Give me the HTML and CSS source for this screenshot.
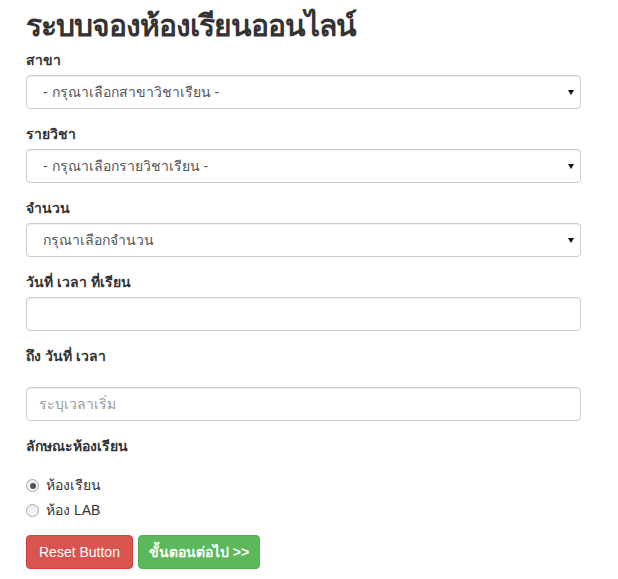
FILE: index.html
```html
<!DOCTYPE html>
<html lang="th">
<head>
<meta charset="utf-8">
<title>ระบบจองห้องเรียนออนไลน์</title>
<link rel="stylesheet" href="styles.css">
</head>
<body>
<main class="page">
  <h1 class="title">ระบบจองห้องเรียนออนไลน์</h1>
  <form class="form">
    <div class="field">
      <label class="field-label">สาขา</label>
      <div class="select-wrap">
        <select class="control select"><option>- กรุณาเลือกสาขาวิชาเรียน -</option></select>
      </div>
    </div>
    <div class="field">
      <label class="field-label">รายวิชา</label>
      <div class="select-wrap">
        <select class="control select"><option>- กรุณาเลือกรายวิชาเรียน -</option></select>
      </div>
    </div>
    <div class="field">
      <label class="field-label">จำนวน</label>
      <div class="select-wrap">
        <select class="control select"><option>กรุณาเลือกจำนวน</option></select>
      </div>
    </div>
    <div class="field">
      <label class="field-label">วันที่ เวลา ที่เรียน</label>
      <input class="control" type="text">
    </div>
    <div class="field">
      <label class="field-label field-label-wide">ถึง วันที่ เวลา</label>
      <input class="control" type="text" placeholder="ระบุเวลาเริ่ม">
    </div>
    <div class="field field-radios">
      <label class="field-label">ลักษณะห้องเรียน</label>
      <label class="radio"><input type="radio" name="room" checked><span>ห้องเรียน</span></label>
      <label class="radio"><input type="radio" name="room"><span>ห้อง LAB</span></label>
    </div>
    <div class="actions">
      <button type="reset" class="btn btn-danger">Reset Button</button>
      <button type="button" class="btn btn-success">ขั้นตอนต่อไป &gt;&gt;</button>
    </div>
  </form>
</main>
</body>
</html>
```
FILE: styles.css
```css
* { box-sizing: border-box; }
html, body { margin: 0; padding: 0; background: #fff; }
body {
  font-family: "Liberation Sans", Arial, sans-serif;
  font-size: 14px;
  line-height: 20px;
  color: #333;
}
.page {
  padding: 0 0 0 26px;
  width: 581px;
}
.title {
  margin: 9px 0 8px;
  font-size: 30px;
  line-height: 33px;
  font-weight: bold;
  letter-spacing: -1px;
  color: #333;
}
.form { display: flex; flex-direction: column; }
.field {
  display: flex;
  flex-direction: column;
  margin-bottom: 15px;
}
.field-label {
  display: block;
  font-weight: bold;
  margin-bottom: 5px;
  line-height: 20px;
}
.field-label-wide { margin-bottom: 21px; }
.control {
  display: block;
  width: 555px;
  height: 34px;
  padding: 6px 12px;
  font-family: inherit;
  font-size: 14px;
  line-height: 20px;
  color: #555;
  background: #fff;
  border: 1px solid #ccc;
  border-radius: 4px;
  box-shadow: inset 0 1px 1px rgba(0,0,0,.075);
  outline: none;
}
.control::placeholder { color: #999; }
.select {
  -webkit-appearance: none;
  appearance: none;
  padding-left: 16px;
}
.select-wrap { position: relative; width: 555px; }
.select-wrap::after {
  content: "";
  position: absolute;
  right: 7px;
  top: 15px;
  border-top: 5px solid #111;
  border-left: 3.5px solid transparent;
  border-right: 3.5px solid transparent;
  pointer-events: none;
}
.field-radios { margin-bottom: 0; }
.field-radios .field-label { margin-bottom: 19px; }
.radio {
  display: flex;
  align-items: flex-start;
  min-height: 20px;
  line-height: 20px;
  margin-bottom: 5px;
  font-weight: normal;
  cursor: pointer;
}
.radio input {
  -webkit-appearance: none;
  appearance: none;
  width: 13px;
  height: 13px;
  margin: 4px 7px 0 0;
  border: 1px solid #a9a9a9;
  border-radius: 50%;
  background: linear-gradient(#ececec, #f8f8f8);
  flex: none;
  position: relative;
}
.radio input:checked::after {
  content: "";
  position: absolute;
  left: 2.5px;
  top: 2.5px;
  width: 6px;
  height: 6px;
  border-radius: 50%;
  background: #555;
}
.actions {
  display: flex;
  gap: 5px;
  margin-top: 10px;
}
.btn {
  display: inline-block;
  height: 34px;
  padding: 6px 12px;
  font-family: inherit;
  font-size: 14px;
  line-height: 20px;
  color: #fff;
  border: 1px solid transparent;
  border-radius: 4px;
  cursor: pointer;
}
.btn-danger { background: #d9534f; border-color: #d43f3a; }
.btn-success {
  background: #5cb85c;
  border-color: #4cae4c;
  padding: 6px 10px;
  font-weight: bold;
}
```
